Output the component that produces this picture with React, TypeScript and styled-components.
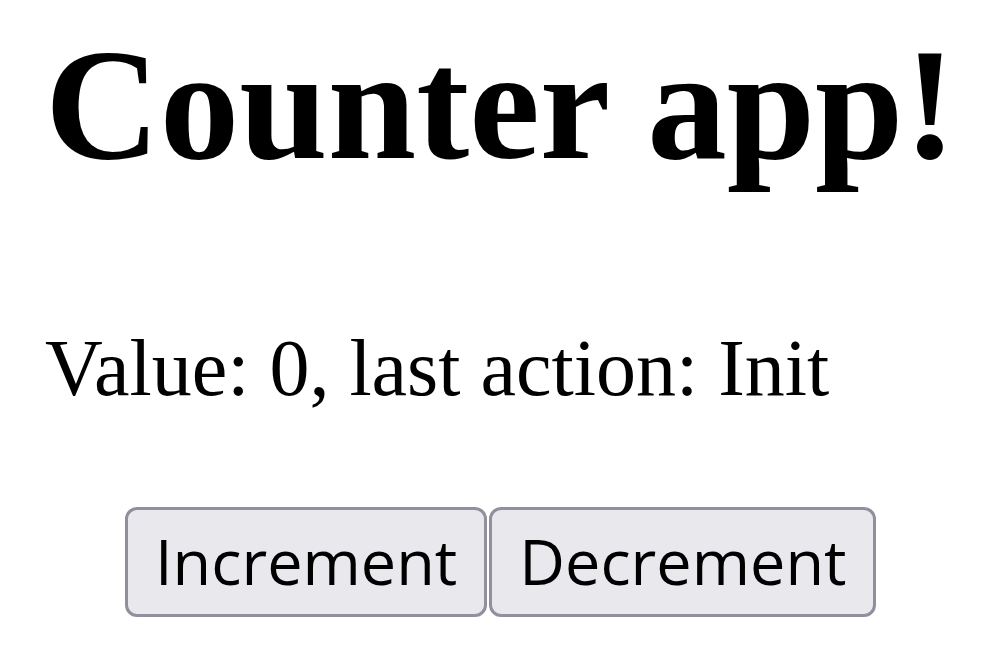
import { useState } from "react";
import styled, { createGlobalStyle } from "styled-components";

const GlobalStyle = createGlobalStyle`
  body {
    margin: 0;
    background: #ffffff;
    color: #000000;
    font-family: "Liberation Serif", "Times New Roman", serif;
  }
`;

const App = () => {
  const [value, setValue] = useState(0);
  const [lastAction, setLastAction] = useState("Init");

  return (
    <>
      <GlobalStyle />
      <Page>
        <Title>Counter app!</Title>
        <Status>
          Value: {value}, last action: {lastAction}
        </Status>
        <Actions>
          <ActionButton
            onClick={() => {
              setValue(value + 1);
              setLastAction("Increment");
            }}
          >
            Increment
          </ActionButton>
          <ActionButton
            onClick={() => {
              setValue(value - 1);
              setLastAction("Decrement");
            }}
          >
            Decrement
          </ActionButton>
        </Actions>
      </Page>
    </>
  );
};

export default App;

const Page = styled.div`
  display: inline-flex;
  flex-direction: column;
  padding: 16px 45px 0;
  white-space: nowrap;
`;

const Title = styled.h1`
  margin: 0;
  font-size: 159px;
  font-weight: bold;
  line-height: 177px;
`;

const Status = styled.p`
  margin: 131px 0 0;
  font-size: 80px;
  line-height: 89px;
`;

const Actions = styled.div`
  display: flex;
  justify-content: center;
  gap: 2px;
  margin-top: 94px;
  padding-left: 0;
`;

const ActionButton = styled.button`
  font-family: "Open Sans", "Noto Sans", sans-serif;
  font-size: 63px;
  line-height: 90px;
  padding: 6px 27px 8px;
  color: #000000;
  background: #e9e9ed;
  border: 3px solid #8f8f9d;
  border-radius: 12px;
  cursor: pointer;
`;
